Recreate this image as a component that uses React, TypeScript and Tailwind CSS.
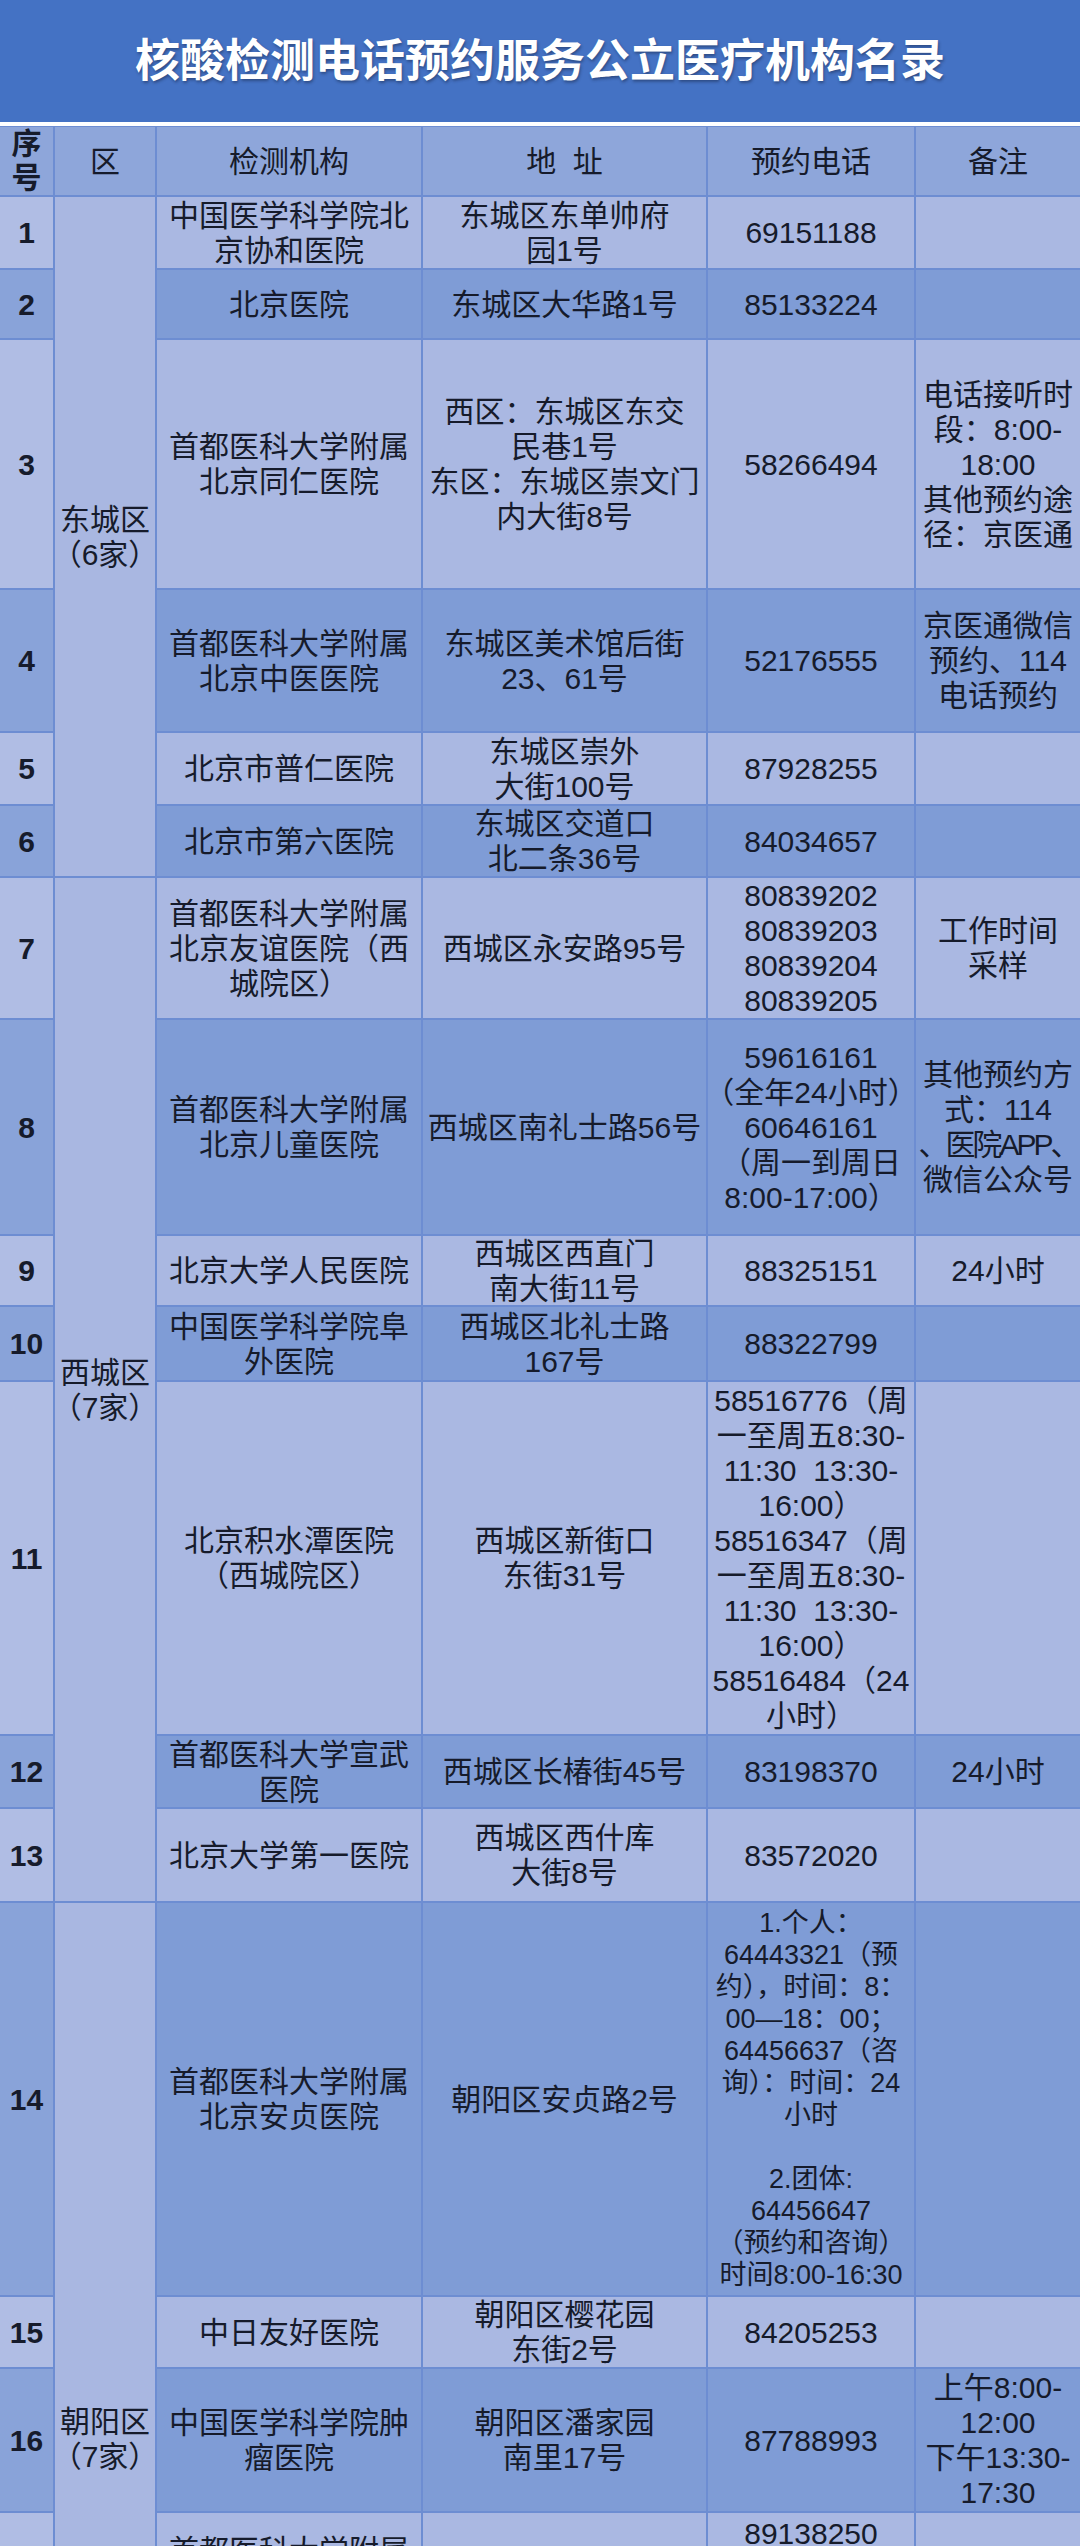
import React from 'react';

// a line is plain text, or text with an extra class (e.g. tighter tracking)
type Line = string | { t: string; cls: string };

type Row = {
    no: number;
    org: Line[];
    addr: Line[];
    phone: Line[];
    note?: Line[];
    small?: boolean;
};

// 区 column: merged cells, placed right after the 序号 cell of their first row
const districts: Record<number, { lines: string[]; span: string }> = {
    1: { lines: ['东城区', '（6家）'], span: 'row-span-6' },
    7: { lines: ['西城区', '（7家）'], span: 'row-span-7' },
    14: { lines: ['朝阳区', '（7家）'], span: 'row-span-5' },
};

const rows: Row[] = [
    { no: 1, org: ['中国医学科学院北', '京协和医院'], addr: ['东城区东单帅府', '园1号'], phone: ['69151188'] },
    { no: 2, org: ['北京医院'], addr: ['东城区大华路1号'], phone: ['85133224'] },
    {
        no: 3,
        org: ['首都医科大学附属', '北京同仁医院'],
        addr: ['西区：东城区东交', '民巷1号', '东区：东城区崇文门', '内大街8号'],
        phone: ['58266494'],
        note: ['电话接听时', '段：8:00-', '18:00', '其他预约途', '径：京医通'],
    },
    {
        no: 4,
        org: ['首都医科大学附属', '北京中医医院'],
        addr: ['东城区美术馆后街', '23、61号'],
        phone: ['52176555'],
        note: ['京医通微信', '预约、114', '电话预约'],
    },
    { no: 5, org: ['北京市普仁医院'], addr: ['东城区崇外', '大街100号'], phone: ['87928255'] },
    { no: 6, org: ['北京市第六医院'], addr: ['东城区交道口', '北二条36号'], phone: ['84034657'] },
    {
        no: 7,
        org: ['首都医科大学附属', '北京友谊医院（西', '城院区）'],
        addr: ['西城区永安路95号'],
        phone: ['80839202', '80839203', '80839204', '80839205'],
        note: ['工作时间', '采样'],
    },
    {
        no: 8,
        org: ['首都医科大学附属', '北京儿童医院'],
        addr: ['西城区南礼士路56号'],
        phone: ['59616161', '（全年24小时）', '60646161', '（周一到周日', '8:00-17:00）'],
        note: ['其他预约方', '式：114', { t: '、医院APP、', cls: 'tracking-[-3px]' }, '微信公众号'],
    },
    { no: 9, org: ['北京大学人民医院'], addr: ['西城区西直门', '南大街11号'], phone: ['88325151'], note: ['24小时'] },
    { no: 10, org: ['中国医学科学院阜', '外医院'], addr: ['西城区北礼士路', '167号'], phone: ['88322799'] },
    {
        no: 11,
        org: ['北京积水潭医院', '（西城院区）'],
        addr: ['西城区新街口', '东街31号'],
        phone: [
            '58516776（周',
            '一至周五8:30-',
            '11:30  13:30-',
            '16:00）',
            '58516347（周',
            '一至周五8:30-',
            '11:30  13:30-',
            '16:00）',
            '58516484（24',
            '小时）',
        ],
    },
    { no: 12, org: ['首都医科大学宣武', '医院'], addr: ['西城区长椿街45号'], phone: ['83198370'], note: ['24小时'] },
    { no: 13, org: ['北京大学第一医院'], addr: ['西城区西什库', '大街8号'], phone: ['83572020'] },
    {
        no: 14,
        org: ['首都医科大学附属', '北京安贞医院'],
        addr: ['朝阳区安贞路2号'],
        phone: [
            '1.个人：',
            '64443321（预',
            '约），时间：8：',
            '00—18：00；',
            '64456637（咨',
            '询）：时间：24',
            '小时',
            '',
            '2.团体:',
            '64456647',
            '（预约和咨询）',
            '时间8:00-16:30',
        ],
        small: true,
    },
    { no: 15, org: ['中日友好医院'], addr: ['朝阳区樱花园', '东街2号'], phone: ['84205253'] },
    {
        no: 16,
        org: ['中国医学科学院肿', '瘤医院'],
        addr: ['朝阳区潘家园', '南里17号'],
        phone: ['87788993'],
        note: ['上午8:00-', '12:00', '下午13:30-', '17:30'],
    },
    {
        no: 17,
        org: ['首都医科大学附属', '北京朝阳医院'],
        addr: ['朝阳区工体南路8号'],
        phone: ['89138250', '（工作日', '8:00-17:00）'],
    },
];

function Lines({ lines, small }: { lines: Line[]; small?: boolean }) {
    return (
        <>
            {lines.map((l, i) => {
                const text = typeof l === 'string' ? l : l.t;
                const extra = typeof l === 'string' ? '' : l.cls;
                return (
                    <div
                        key={i}
                        className={`whitespace-pre ${small ? 'text-[27px] leading-[32px]' : ''} ${extra}`}
                    >
                        {text || '\u00a0'}
                    </div>
                );
            })}
        </>
    );
}

export default function App() {
    const cell = 'flex flex-col items-center justify-center text-center';

    return (
        <div className="w-[1080px] h-[2546px] overflow-hidden bg-white font-['Liberation_Sans','Noto_Sans_CJK_SC',sans-serif] text-[#161b2b]">
            {/* Title band */}
            <div className="h-[122px] bg-[#4472c4] flex items-center justify-center">
                <h1 className="text-[45px] font-bold text-white leading-none [text-shadow:1px_2px_3px_rgba(20,30,60,0.45)]">
                    核酸检测电话预约服务公立医疗机构名录
                </h1>
            </div>
            <div className="h-[4px] bg-white" />

            {/* Table */}
            <div className="grid grid-cols-[53px_100px_264px_283px_206px_164px] grid-rows-[68px_71px_68px_248px_141px_71px_70px_140px_214px_69px_73px_352px_71px_92px_392px_70px_142px_110px_350px] gap-[2px] pt-[1px] bg-[#6d8dd2] text-[30px] leading-[35px]">
                {/* Header */}
                <div className={`${cell} bg-[#8ea6da] font-bold leading-[34px]`}>
                    <div>序</div>
                    <div>号</div>
                </div>
                <div className={`${cell} bg-[#8ea6da]`}>区</div>
                <div className={`${cell} bg-[#8ea6da]`}>检测机构</div>
                <div className={`${cell} bg-[#8ea6da] whitespace-pre`}>地  址</div>
                <div className={`${cell} bg-[#8ea6da]`}>预约电话</div>
                <div className={`${cell} bg-[#8ea6da]`}>备注</div>

                {rows.map((r) => {
                    const odd = r.no % 2 === 1;
                    const bg = odd ? 'bg-[#aab8e2]' : 'bg-[#7f9cd6]';
                    const noBg = odd ? 'bg-[#b0bde4]' : 'bg-[#89a3d9]';
                    const d = districts[r.no];
                    return (
                        <React.Fragment key={r.no}>
                            <div className={`${cell} ${noBg} font-bold`}>{r.no}</div>
                            {d && (
                                <div className={`${cell} ${d.span} bg-[#a9b7e1]`}>
                                    <Lines lines={d.lines} />
                                </div>
                            )}
                            <div className={`${cell} ${bg}`}>
                                <Lines lines={r.org} />
                            </div>
                            <div className={`${cell} ${bg}`}>
                                <Lines lines={r.addr} />
                            </div>
                            <div className={`${cell} ${bg}`}>
                                <Lines lines={r.phone} small={r.small} />
                            </div>
                            <div className={`${cell} ${bg}`}>
                                {r.note && <Lines lines={r.note} />}
                            </div>
                        </React.Fragment>
                    );
                })}

                {/* next rows of 朝阳区 continue below the visible area */}
                <div className="bg-[#89a3d9]" />
                <div className="bg-[#7f9cd6]" />
                <div className="bg-[#7f9cd6]" />
                <div className="bg-[#7f9cd6]" />
                <div className="bg-[#7f9cd6]" />
            </div>
        </div>
    );
}
